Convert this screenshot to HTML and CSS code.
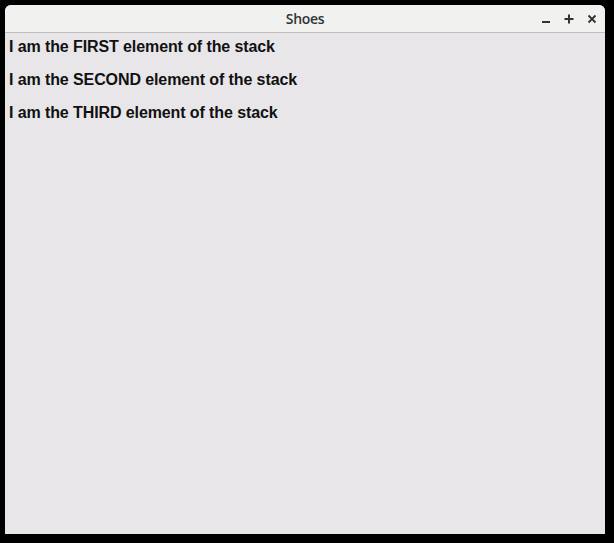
FILE: index.html
```html
<!DOCTYPE html>
<html>
<head>
<meta charset="utf-8">
<link rel="stylesheet" href="styles.css">
</head>
<body>
<div class="window">
  <div class="titlebar">
    <div class="title">Shoes</div>
    <div class="controls">
      <svg class="btn" width="12" height="12" viewBox="0 0 12 12"><rect x="2" y="8" width="8" height="2" fill="#2e3436"/></svg>
      <svg class="btn" width="12" height="12" viewBox="0 0 12 12"><rect x="1.5" y="5" width="9" height="2" fill="#2e3436"/><rect x="5" y="1.5" width="2" height="9" fill="#2e3436"/></svg>
      <svg class="btn" width="12" height="12" viewBox="0 0 12 12"><path d="M2.5 2.5 L9.5 9.5 M9.5 2.5 L2.5 9.5" stroke="#2e3436" stroke-width="1.8"/></svg>
    </div>
  </div>
  <div class="content">
    <p class="para">I am the FIRST element of the stack</p>
    <p class="para">I am the SECOND element of the stack</p>
    <p class="para">I am the THIRD element of the stack</p>
  </div>
</div>
</body>
</html>
```
FILE: styles.css
```css
html, body {
  margin: 0;
  padding: 0;
  background: #000;
  width: 614px;
  height: 543px;
  overflow: hidden;
}
.window {
  margin: 5px 0 0 5px;
  width: 600px;
  height: 529px;
  display: flex;
  flex-direction: column;
  border-radius: 6px 6px 0 0;
  overflow: hidden;
  background: #e8e6e9;
}
.titlebar {
  height: 27px;
  background: #f1f1ef;
  border-bottom: 1px solid #bdbdbb;
  display: flex;
  align-items: center;
  justify-content: center;
  position: relative;
  flex-shrink: 0;
}
.title {
  font-family: "Open Sans", "DejaVu Sans", sans-serif;
  font-size: 14px;
  color: #2e3436;
  font-weight: 600;
  letter-spacing: -0.3px;
}
.controls {
  position: absolute;
  right: 7px;
  top: 8px;
  display: flex;
  gap: 11px;
}
.btn {
  display: block;
}
.content {
  flex: 1;
  padding: 5px 0 0 4px;
}
.para {
  margin: 0 0 15px 0;
  font-family: "Liberation Sans", Arial, sans-serif;
  font-weight: bold;
  font-size: 16px;
  line-height: 18px;
  letter-spacing: -0.1px;
  color: #111;
}
```
